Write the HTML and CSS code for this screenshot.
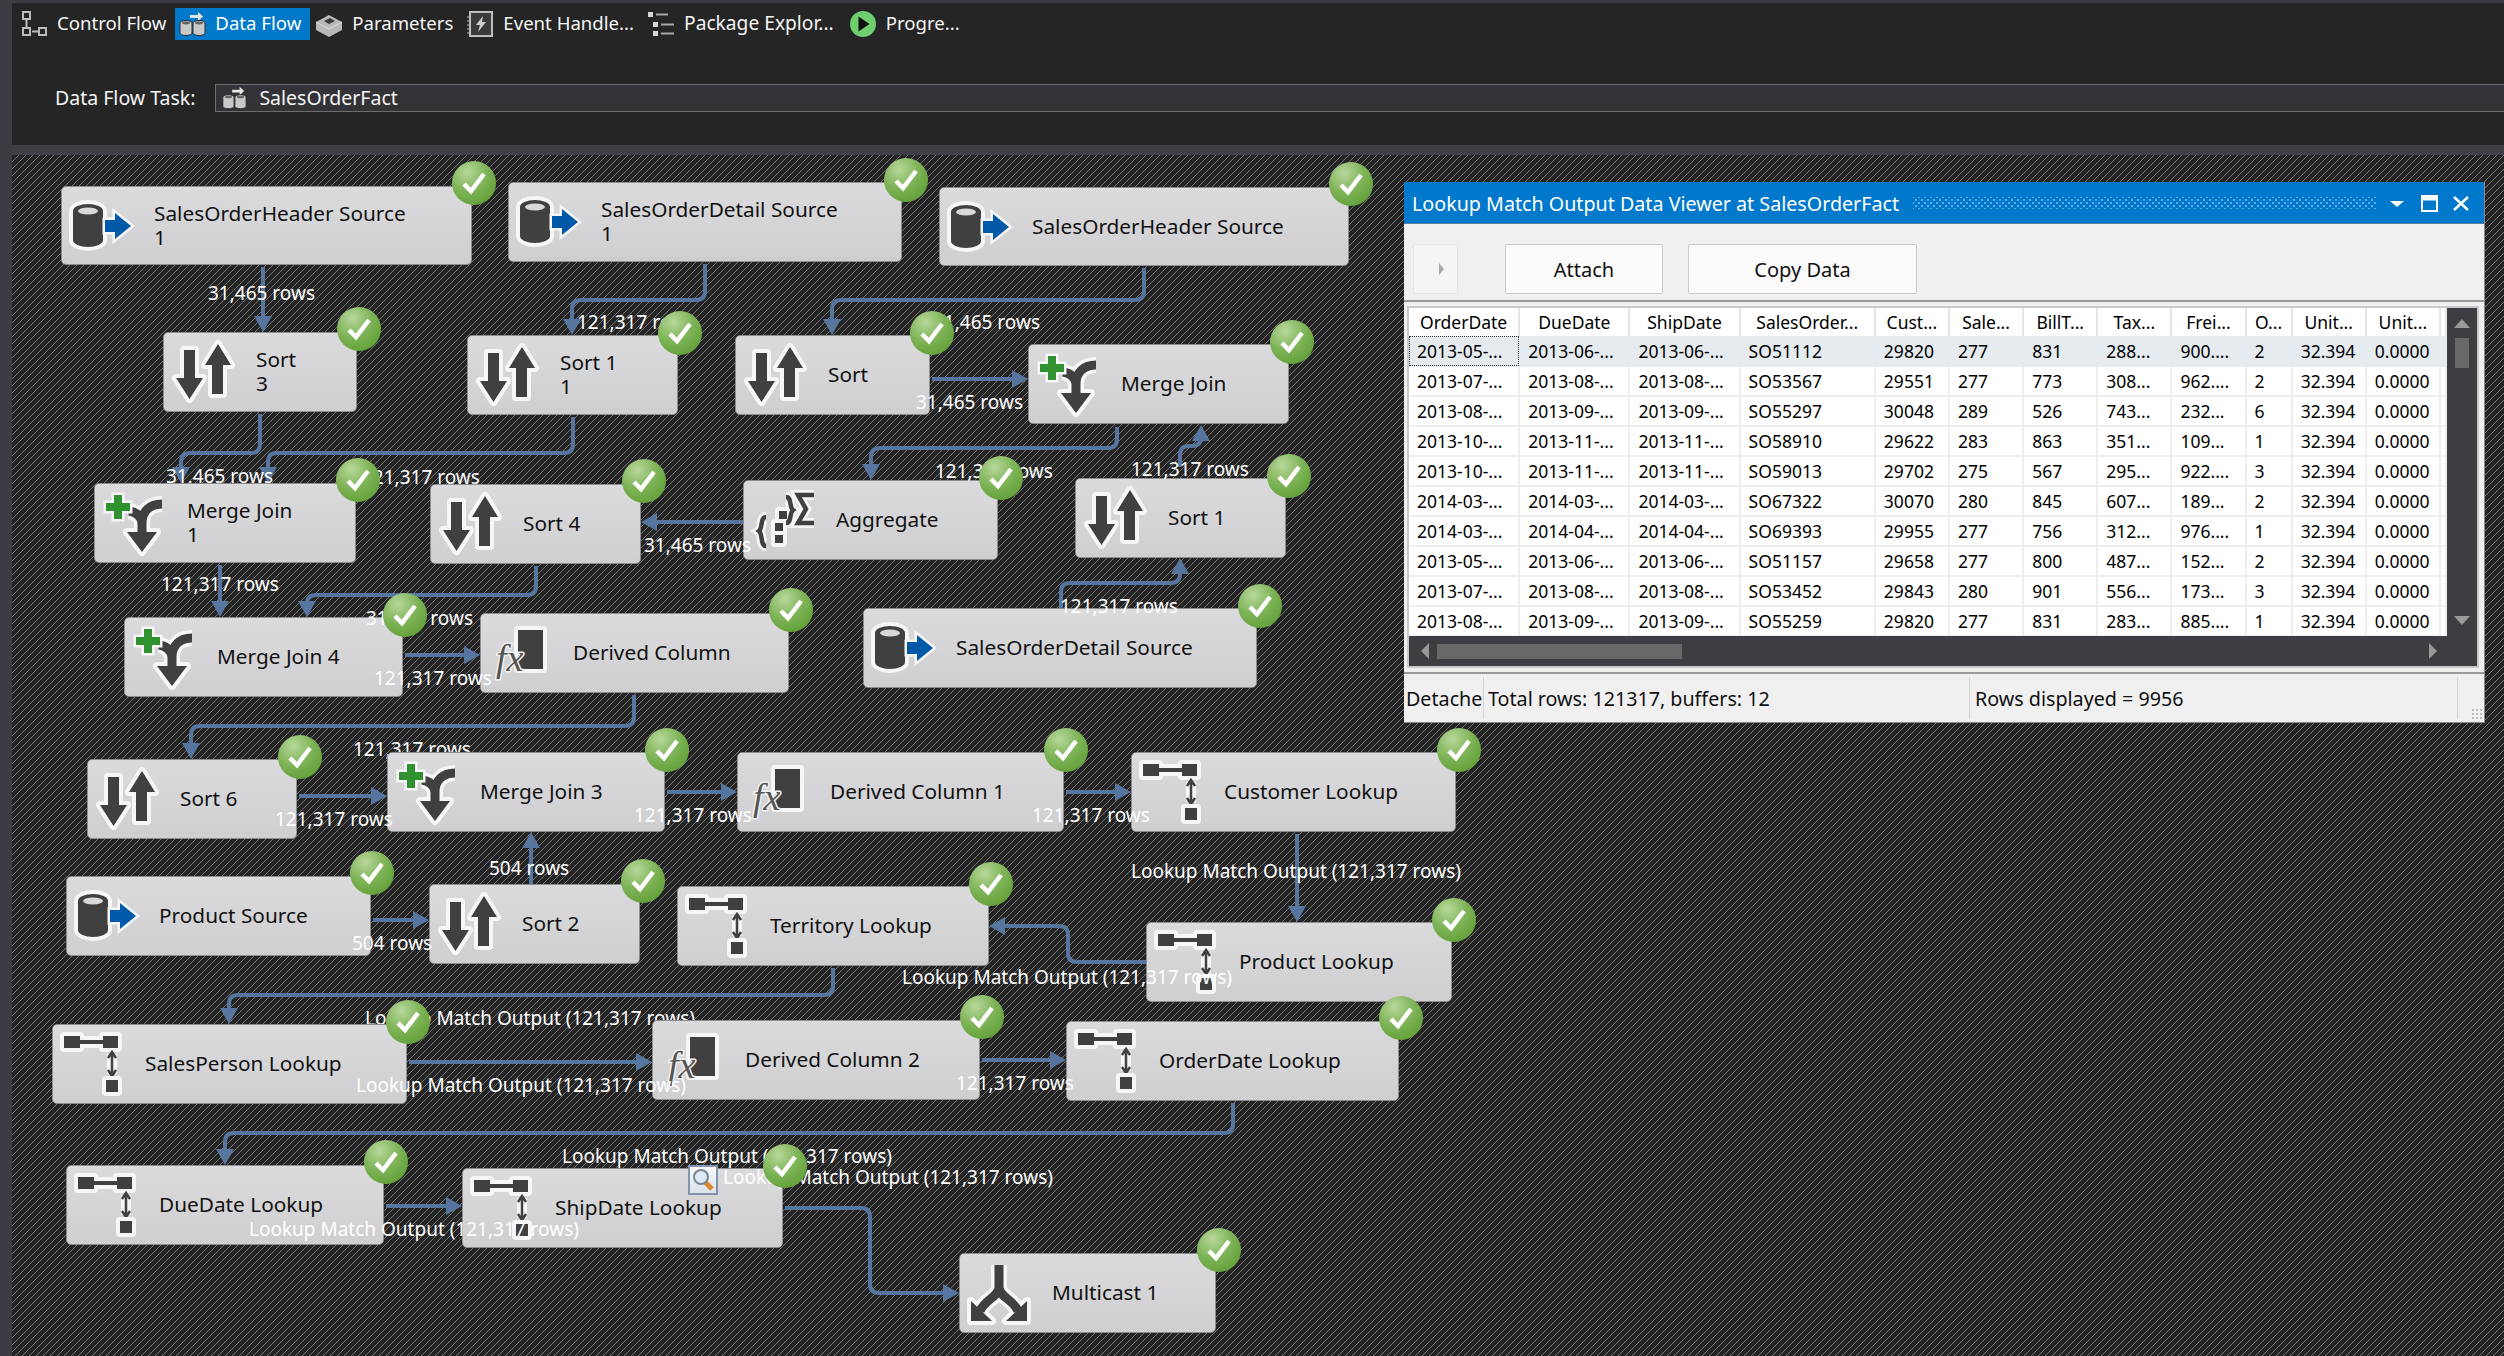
FILE: index.html
```html
<!DOCTYPE html>
<html lang="en">
<head>
  <meta charset="UTF-8" />
  <meta name="viewport" content="width=device-width, initial-scale=1.0" />
  <title>SalesOrderFact - Data Flow</title>
  <link rel="stylesheet" href="styles.css">
</head>
<body>
  <!-- icon sheet, used by the nodes and the tabs -->
  <svg class="icon-sheet" aria-hidden="true">
    <symbol id="icon-source" viewBox="0 0 64 64">
      <path class="dark" d="M4 17 a15 7 0 0 1 30 0 V46 a15 7 0 0 1 -30 0 Z" />
      <ellipse cx="19" cy="17" rx="10" ry="3.5" fill="#d9d9d9" />
      <path class="blue" d="M36 26 H46 V19 L62 32 L46 45 V38 H36 Z" />
    </symbol>
    <symbol id="icon-sort" viewBox="0 0 64 64">
      <path class="dark" d="M13 10 H24 V38 H32 L18.5 59 L5 38 H13 Z" />
      <path class="dark" d="M41 54 V25 H34 L47 4 L60 25 H52 V54 Z" />
    </symbol>
    <symbol id="icon-merge" viewBox="0 0 64 64">
      <path class="halo" d="M60 13 C48 13 40 20 40 32 V44 M27 20 C34 21 39 25 40 32" />
      <path class="dark" d="M25 41 H55 L40 61 Z" />
      <path class="line" d="M60 13 C48 13 40 20 40 32 V44 M27 20 C34 21 39 25 40 32" />
      <path class="green" d="M12 4 H20 V12 H28 V20 H20 V28 H12 V20 H4 V12 H12 Z" />
    </symbol>
    <symbol id="icon-derived" viewBox="0 0 64 64">
      <rect class="dark" x="30" y="9" width="25" height="39" />
      <text class="icon-fx" x="8" y="50">fx</text>
    </symbol>
    <symbol id="icon-aggregate" viewBox="0 0 64 64">
      <path class="halo-thin" d="M15 29 C9 29 12 40 8 43 C12 46 9 58 15 58 M35 9 C41 9 38 19 42 22 C38 25 41 35 35 35 M63 7 H47 L55 21 L47 35 H63" />
      <path class="dark" d="M28 23 h8 v8 h-8 Z M24 35 h8 v8 h-8 Z M24 47 h8 v8 h-8 Z" />
      <path class="line-thin" d="M15 29 C9 29 12 40 8 43 C12 46 9 58 15 58 M35 9 C41 9 38 19 42 22 C38 25 41 35 35 35 M63 7 H47 L55 21 L47 35 H63" />
    </symbol>
    <symbol id="icon-lookup" viewBox="0 0 64 64">
      <path class="dark" d="M4 4 H20 V8 H43 V4 H58 V16 H43 V12 H20 V16 H4 Z" />
      <path class="halo-thin" d="M52 22 V42" />
      <path class="line-arrow" d="M52 22 V42 M48 26 L52 20 L56 26 M48 38 L52 44 L56 38" />
      <rect class="dark" x="46" y="48" width="12" height="12" />
    </symbol>
    <symbol id="icon-multicast" viewBox="0 0 64 64">
      <path class="halo" d="M32 4 V26 C32 36 18 38 13 50 M32 26 C32 36 46 38 51 50" />
      <path class="dark" d="M4 40 L25 60 H4 Z M60 40 L39 60 H60 Z" />
      <path class="line" d="M32 4 V26 C32 36 18 38 13 50 M32 26 C32 36 46 38 51 50" />
    </symbol>
    <symbol id="tab-data" viewBox="0 0 28 28">
      <path d="M12 5 H20 V2 L25 6.5 L20 11 V8 H12 Z" fill="#e6e6e6" />
      <path d="M2 13 a6 2.5 0 0 1 12 0 V23 a6 2.5 0 0 1 -12 0 Z" fill="#c9c9c9" stroke="#2c2c2c" />
      <path d="M15 13 a6 2.5 0 0 1 12 0 V23 a6 2.5 0 0 1 -12 0 Z" fill="#c9c9c9" stroke="#2c2c2c" />
      <ellipse cx="8" cy="13" rx="4" ry="1.4" fill="#666" />
      <ellipse cx="21" cy="13" rx="4" ry="1.4" fill="#666" />
    </symbol>
  </svg>

  <div class="tab-bar">
    <div class="tab">
      <svg class="tab-icon" viewBox="0 0 28 28"><path d="M3 2 h7 v7 h-7 Z M3 18 h7 v7 h-7 Z M19 18 h7 v7 h-7 Z" fill="none" stroke="#bcbcbc" stroke-width="2" /><path d="M6.500 10 V17 M12 21.500 H18" stroke="#bcbcbc" stroke-width="2" /></svg>
      <span>Control Flow</span>
    </div>
    <div class="tab tab-active">
      <svg class="tab-icon"><use href="#tab-data" /></svg>
      <span>Data Flow</span>
    </div>
    <div class="tab">
      <svg class="tab-icon" viewBox="0 0 28 28"><path d="M1 12 L14 5 L27 12 V20 L14 27 L1 20 Z" fill="#b8b8b8" /><path d="M9 11 L15 8 L20 11 L14 14 Z" fill="#3a3a3a" /><path d="M1 12 L14 19 L27 12" fill="none" stroke="#dcdcdc" /></svg>
      <span>Parameters</span>
    </div>
    <div class="tab">
      <svg class="tab-icon" viewBox="0 0 28 28"><rect x="4" y="2" width="22" height="24" fill="#3a3a3a" stroke="#bdbdbd" stroke-width="2" /><path d="M1 7 h4 M1 11 h4 M1 15 h4 M1 19 h4 M1 23 h4" stroke="#bdbdbd" /><path d="M17 6 L10 15 H14 L12 22 L20 12 H16 Z" fill="#cfcfcf" /></svg>
      <span>Event Handle...</span>
    </div>
    <div class="tab tab-package">
      <svg class="tab-icon" viewBox="0 0 28 28"><path d="M1 2 h5 v5 h-5 Z M6 12 h5 v5 h-5 Z M6 21 h5 v5 h-5 Z" fill="#d6d6d6" /><path d="M9 4.500 H21 M14 14.500 H27 M14 23.500 H27" stroke="#a8a8a8" stroke-width="2" /></svg>
      <span>Package Explor...</span>
    </div>
    <div class="tab">
      <svg class="tab-icon" viewBox="0 0 28 28"><circle cx="14" cy="14" r="13" fill="#6fcf6f" /><path d="M9.500 6.500 L20.500 14 L9.500 21.500 Z" fill="#111" /></svg>
      <span>Progre...</span>
    </div>
  </div>

  <div class="task-bar">
    <span class="task-label">Data Flow Task:</span>
    <div class="task-box">
      <svg class="task-icon"><use href="#tab-data" /></svg>
      <span>SalesOrderFact</span>
    </div>
  </div>
  <div class="band"></div>

  <div class="canvas" id="canvas">
    <svg class="paths" id="paths"></svg>

    <div class="viewer">
      <div class="viewer-title">
        <span class="viewer-name">Lookup Match Output Data Viewer at SalesOrderFact</span>
        <span class="viewer-dots"></span>
        <svg class="viewer-controls" viewBox="0 0 80 16">
          <path d="M0 6 H14 L7 12 Z" fill="#fff" />
          <path d="M32 1 H47 V16 H32 Z" fill="none" stroke="#fff" stroke-width="2" />
          <path d="M32 3.500 H47" stroke="#fff" stroke-width="4" />
          <path d="M64 2 L78 15 M78 2 L64 15" stroke="#fff" stroke-width="2.500" />
        </svg>
      </div>
      <div class="viewer-tools">
        <button class="tool-toggle"><i class="tool-arrow"></i></button>
        <button class="tool-btn attach-btn">Attach</button>
        <button class="tool-btn copy-btn">Copy Data</button>
      </div>
      <div class="grid-frame">
        <div class="grid-main">
          <div class="grid-data">
            <table class="grid">
              <colgroup>
                <col class="w-date"><col class="w-date"><col class="w-date"><col class="w-order">
                <col class="w-num"><col class="w-num"><col class="w-num"><col class="w-num"><col class="w-num">
                <col class="w-small"><col class="w-num"><col class="w-num"><col class="w-rest">
              </colgroup>
              <thead>
                <tr>
                  <th>OrderDate</th><th>DueDate</th><th>ShipDate</th><th>SalesOrder...</th><th>Cust...</th><th>Sale...</th>
                  <th>BillT...</th><th>Tax...</th><th>Frei...</th><th>O...</th><th>Unit...</th><th>Unit...</th><th></th>
                </tr>
              </thead>
              <tbody id="rows"></tbody>
            </table>
          </div>
          <div class="vscroll">
            <i class="arrow-up"></i>
            <i class="vthumb"></i>
            <i class="arrow-down"></i>
          </div>
        </div>
        <div class="hscroll">
          <i class="arrow-left"></i>
          <i class="hthumb"></i>
          <i class="arrow-right"></i>
        </div>
      </div>
      <div class="viewer-status">
        <span class="status-cell status-first">Detache</span>
        <span class="status-cell status-total">Total rows: 121317, buffers: 12</span>
        <span class="status-cell status-shown">Rows displayed = 9956</span>
        <span class="status-cell status-end"><i class="grip"></i></span>
      </div>
    </div>
  </div>

  <script src="app.js"></script>
</body>
</html>
```

FILE: styles.css
```css
body {
  margin: 0;
  height: 1356px;
  overflow: hidden;
  background: #3c3d42;
  font-family: "Noto Sans", "Open Sans", sans-serif;
  padding: 3px 0 0 12px;
  box-sizing: border-box;
}
.icon-sheet {
  display: none;
}
symbol {
  overflow: visible;
}

/* tabs */
.tab-bar {
  display: flex;
  height: 37px;
  padding: 5px 0 0 8px;
  box-sizing: border-box;
  background: #252526;
  gap: 5px;
}
.tab {
  display: flex;
  align-items: flex-start;
  gap: 9px;
  height: 32px;
  padding: 0 8px 0 0;
  font-size: 18.600px;
  line-height: 30px;
  color: #f4f4f4;
  white-space: nowrap;
}
.tab-active {
  background: #0079cb;
  color: #fff;
  margin-left: -4px;
  padding: 0 9px 0 3px;
}
.tab-package {
  font-size: 19.200px;
  padding-right: 10px;
}
.tab-icon {
  width: 28px;
  height: 28px;
  margin-top: 2px;
  flex: none;
}
.task-bar {
  display: flex;
  align-items: center;
  height: 105px;
  padding: 10px 0 0 43px;
  box-sizing: border-box;
  background: #252526;
  gap: 20px;
}
.task-label {
  font-size: 19.500px;
  color: #f4f4f4;
}
.task-box {
  flex: 1;
  display: flex;
  align-items: center;
  gap: 11px;
  height: 28px;
  box-sizing: border-box;
  padding-left: 4px;
  background: #323237;
  border: 1px solid #6d6d6d;
  border-right: 0;
  font-size: 19.500px;
  color: #f4f4f4;
}
.task-icon {
  width: 28px;
  height: 26px;
}
.band {
  height: 10px;
  background: #3f4045;
}

/* diagram */
.canvas {
  position: relative;
  height: 1201px;
  background-color: #252526;
  background-image: linear-gradient(135deg, transparent 45%, #747475 45%, #747475 55%, transparent 55%);
  background-size: 7px 7px;
  overflow: hidden;
}
.paths {
  position: absolute;
  left: 0;
  top: 0;
  width: 2492px;
  height: 1201px;
  z-index: 1;
}
.flow {
  fill: none;
  stroke: #56769f;
  stroke-width: 4;
}
.flow-head {
  fill: #56769f;
}
.node {
  position: absolute;
  z-index: 3;
  display: flex;
  align-items: center;
  box-sizing: border-box;
  padding: 0 0 2px 92px;
  background: linear-gradient(#dbdbdd, #cfcfd1);
  border: 1px solid #8d8d8d;
  border-radius: 5px;
  font-size: 20.800px;
  line-height: 24px;
  color: #111;
  white-space: pre-line;
}
.node-icon {
  position: absolute;
  left: 7px;
  top: 7px;
  width: 64px;
  height: 64px;
  overflow: visible;
}
.flow-label {
  position: absolute;
  z-index: 4;
  font-size: 19px;
  line-height: 24px;
  color: #fff;
  white-space: nowrap;
}
.flow-label-under {
  z-index: 2;
}
.badge {
  position: absolute;
  z-index: 5;
  width: 44px;
  height: 44px;
  border-radius: 50%;
  background: radial-gradient(circle at 35% 25%, #b7d79a 0, #7db356 45%, #5f9e35 85%, #4f8d2b 100%);
}
.badge-check {
  position: absolute;
  left: 9px;
  top: 10px;
  width: 26px;
  height: 24px;
}
.magnifier {
  position: absolute;
  z-index: 4;
  left: 676px;
  top: 1010px;
  width: 30px;
  height: 30px;
  box-sizing: border-box;
  border: 2px solid #8494ad;
  background: linear-gradient(#f6f8fb, #dbe2ec);
}
.magnifier-glass {
  display: block;
  width: 26px;
  height: 26px;
}

/* symbol parts */
.dark {
  fill: #404040;
  stroke: #f6f6f6;
  stroke-width: 8;
  stroke-linejoin: round;
  paint-order: stroke;
}
.blue {
  fill: #0059a8;
  stroke: #f6f6f6;
  stroke-width: 5;
  paint-order: stroke;
}
.green {
  fill: #2f9130;
  stroke: #f6f6f6;
  stroke-width: 5;
  paint-order: stroke;
}
.halo, .halo-thin {
  fill: none;
  stroke: #f6f6f6;
  stroke-width: 16;
}
.halo-thin {
  stroke-width: 10;
}
.line, .line-thin, .line-arrow {
  fill: none;
  stroke: #404040;
  stroke-width: 9;
}
.line-thin {
  stroke-width: 4.500;
}
.line-arrow {
  stroke-width: 2.500;
}
.icon-fx {
  font-family: "Liberation Serif", serif;
  font-style: italic;
  font-size: 38px;
  fill: #555;
  stroke: #f2f2f2;
  stroke-width: 3;
  paint-order: stroke;
}

/* data viewer window */
.viewer {
  position: absolute;
  z-index: 6;
  left: 1392px;
  top: 27px;
  width: 1081px;
  height: 541px;
  display: flex;
  flex-direction: column;
  box-sizing: border-box;
  background: #f0f0f0;
  border-right: 1px solid #8a8a8a;
  border-bottom: 1px solid #8a8a8a;
}
.viewer-title {
  display: flex;
  align-items: center;
  height: 42px;
  flex: none;
  padding: 0 14px 0 8px;
  background: #0078cb;
  border-bottom: 1px solid #5c7f9c;
  box-sizing: border-box;
  color: #fff;
  font-size: 19.700px;
}
.viewer-name {
  padding-top: 2px;
}
.viewer-dots {
  flex: 1;
  height: 12px;
  margin: 0 14px;
  background-image: radial-gradient(#5cabe2 1px, transparent 1.500px), radial-gradient(#5cabe2 1px, transparent 1.500px);
  background-size: 6px 6px;
  background-position: 0 0, 3px 3px;
}
.viewer-controls {
  width: 80px;
  height: 16px;
  overflow: visible;
}
.viewer-tools {
  display: flex;
  align-items: flex-start;
  height: 78px;
  flex: none;
  box-sizing: border-box;
  padding: 20px 0 0 9px;
  border-bottom: 2px solid #9a9a9a;
}
.tool-toggle, .tool-btn {
  height: 50px;
  box-sizing: border-box;
  background: #fbfbfb;
  border: 1px solid #cbcbcb;
  border-radius: 2px;
  font: inherit;
  font-size: 20px;
  color: #111;
}
.tool-toggle {
  width: 45px;
  margin-right: 47px;
  background: #f5f5f5;
  border-color: #e6e6e6;
}
.tool-arrow {
  display: block;
  margin-left: 19px;
  border-left: 5px solid #a8a8a8;
  border-top: 6px solid transparent;
  border-bottom: 6px solid transparent;
  width: 0;
}
.attach-btn {
  width: 158px;
  margin-right: 25px;
}
.copy-btn {
  width: 229px;
}
.grid-frame {
  display: flex;
  flex-direction: column;
  flex: none;
  width: 1072px;
  height: 362px;
  margin: 4px 0 0 3px;
  box-sizing: border-box;
  border: 2px solid #c9c9c9;
}
.grid-main {
  display: flex;
  height: 328px;
}
.grid-data {
  width: 1038px;
  height: 328px;
  background: #fff;
  overflow: hidden;
}
.grid {
  border-collapse: collapse;
  table-layout: fixed;
  width: 1038px;
  font-size: 17.500px;
  color: #000;
}
.w-date { width: 110px; }
.w-order { width: 135px; }
.w-num { width: 74px; }
.w-small { width: 46px; }
.w-rest { width: 6px; }
.grid th {
  height: 28px;
  padding: 0;
  font-weight: 400;
  text-align: center;
  border-right: 2px solid #e6e6e6;
  white-space: nowrap;
  overflow: hidden;
}
.grid td {
  height: 30px;
  padding: 0 0 0 8px;
  box-sizing: border-box;
  border-right: 2px solid #eee;
  border-bottom: 2px solid #eee;
  white-space: nowrap;
  overflow: hidden;
}
.row-current td {
  background: #e6ebf0;
  border-right-color: #e6ebf0;
  border-bottom-color: #e6ebf0;
}
.row-current td:first-child {
  outline: 1px dotted #333;
  outline-offset: -1px;
}
.vscroll {
  position: relative;
  width: 30px;
  background: #3e3e42;
}
.arrow-up, .arrow-down, .arrow-left, .arrow-right, .vthumb, .hthumb {
  position: absolute;
}
.arrow-up {
  left: 7px;
  top: 11px;
  border: 8px solid transparent;
  border-top: 0;
  border-bottom: 9px solid #999;
}
.arrow-down {
  left: 7px;
  bottom: 11px;
  border: 8px solid transparent;
  border-bottom: 0;
  border-top: 9px solid #999;
}
.vthumb {
  left: 8px;
  top: 30px;
  width: 14px;
  height: 30px;
  background: #686868;
}
.hscroll {
  position: relative;
  height: 30px;
  background: #3e3e42;
}
.arrow-left {
  left: 12px;
  top: 7px;
  border: 8px solid transparent;
  border-left: 0;
  border-right: 8px solid #999;
}
.arrow-right {
  right: 40px;
  top: 7px;
  border: 8px solid transparent;
  border-right: 0;
  border-left: 8px solid #999;
}
.hthumb {
  left: 28px;
  top: 8px;
  width: 245px;
  height: 15px;
  background: #686868;
}
.viewer-status {
  display: flex;
  flex: 1;
  align-items: stretch;
  margin-top: 4px;
  padding: 3px 0;
  border-top: 2px solid #9a9a9a;
  font-size: 19.700px;
  color: #111;
  white-space: nowrap;
}
.status-cell {
  display: flex;
  align-items: center;
  box-sizing: border-box;
  overflow: hidden;
  border-right: 1px solid #d5d5d5;
}
.status-first {
  width: 80px;
  padding-left: 2px;
}
.status-total {
  width: 486px;
  padding-left: 4px;
}
.status-shown {
  width: 488px;
  padding-left: 5px;
}
.status-end {
  flex: 1;
  position: relative;
  border-right: 0;
}
.grip {
  position: absolute;
  right: 1px;
  bottom: -1px;
  width: 12px;
  height: 12px;
  background-image: radial-gradient(#bbb 1px, transparent 1.500px);
  background-size: 4px 4px;
}
```

FILE: app.js
```js
// page coords of the canvas corner, the data below was read off the full page
const OX = 12;
const OY = 155;

// name, left, top, right, bottom, icon, badge centre x, badge centre y
const nodes = [
  ["SalesOrderHeader Source\n1", 61, 186, 472, 265, "source", 474, 183],
  ["SalesOrderDetail Source\n1", 508, 182, 902, 262, "source", 906, 180],
  ["SalesOrderHeader Source", 939, 187, 1349, 266, "source", 1351, 184],
  ["Sort\n3", 163, 332, 357, 412, "sort", 359, 329],
  ["Sort 1\n1", 467, 335, 678, 415, "sort", 680, 333],
  ["Sort", 735, 335, 930, 415, "sort", 932, 333],
  ["Merge Join", 1028, 344, 1289, 424, "merge", 1292, 342],
  ["Merge Join\n1", 94, 483, 356, 563, "merge", 358, 480],
  ["Sort 4", 430, 484, 641, 564, "sort", 644, 481],
  ["Aggregate", 743, 480, 998, 560, "aggregate", 1001, 478],
  ["Sort 1", 1075, 478, 1286, 558, "sort", 1289, 476],
  ["Merge Join 4", 124, 617, 403, 697, "merge", 405, 615],
  ["Derived Column", 480, 613, 789, 693, "derived", 791, 610],
  ["SalesOrderDetail Source", 863, 608, 1257, 688, "source", 1260, 606],
  ["Sort 6", 87, 759, 297, 839, "sort", 300, 757],
  ["Merge Join 3", 387, 752, 665, 832, "merge", 667, 750],
  ["Derived Column 1", 737, 752, 1064, 832, "derived", 1066, 750],
  ["Customer Lookup", 1131, 752, 1456, 832, "lookup", 1459, 750],
  ["Product Source", 66, 876, 371, 956, "source", 372, 873],
  ["Sort 2", 429, 884, 640, 964, "sort", 643, 881],
  ["Territory Lookup", 677, 886, 989, 966, "lookup", 991, 884],
  ["Product Lookup", 1146, 922, 1452, 1002, "lookup", 1454, 920],
  ["SalesPerson Lookup", 52, 1024, 407, 1104, "lookup", 408, 1022],
  ["Derived Column 2", 652, 1020, 980, 1100, "derived", 982, 1017],
  ["OrderDate Lookup", 1066, 1021, 1399, 1101, "lookup", 1401, 1018],
  ["DueDate Lookup", 66, 1165, 384, 1245, "lookup", 386, 1162],
  ["ShipDate Lookup", 462, 1168, 783, 1248, "lookup", 785, 1166],
  ["Multicast 1", 959, 1253, 1216, 1333, "multicast", 1219, 1250],
];

// points of each data path, the last one is the arrow tip
const flows = [
  [[263, 267], [263, 332]],
  [[260, 414], [260, 453], [181, 453], [181, 483]],
  [[573, 417], [573, 453], [268, 453], [268, 483]],
  [[705, 264], [705, 300], [572, 300], [572, 335]],
  [[1144, 268], [1144, 300], [832, 300], [832, 335]],
  [[932, 379], [1028, 379]],
  [[1117, 427], [1117, 448], [871, 448], [871, 480]],
  [[1180, 467], [1180, 446], [1201, 446], [1201, 425]],
  [[1061, 608], [1061, 583], [1180, 583], [1180, 558]],
  [[743, 522], [641, 522]],
  [[220, 565], [220, 617]],
  [[536, 566], [536, 595], [307, 595], [307, 617]],
  [[405, 655], [480, 655]],
  [[634, 695], [634, 726], [191, 726], [191, 759]],
  [[299, 796], [387, 796]],
  [[667, 792], [737, 792]],
  [[1066, 792], [1131, 792]],
  [[1297, 834], [1297, 922]],
  [[1146, 962], [1068, 962], [1068, 926], [989, 926]],
  [[833, 968], [833, 995], [229, 995], [229, 1024]],
  [[373, 920], [429, 920]],
  [[531, 884], [531, 832]],
  [[409, 1062], [652, 1062]],
  [[982, 1060], [1066, 1060]],
  [[1233, 1103], [1233, 1133], [225, 1133], [225, 1165]],
  [[386, 1206], [462, 1206]],
  [[785, 1208], [870, 1208], [870, 1293], [959, 1293]],
];

const LOOKUP = "Lookup Match Output (121,317 rows)";
const RS = "121,317 rows";
const SH = "31,465 rows";

// text, left, centre y, drawn under the nodes
const labels = [
  [SH, 208, 293], [RS, 577, 322], [SH, 933, 322], [SH, 916, 402],
  [SH, 166, 476, true], [RS, 362, 477], [RS, 161, 584], [SH, 366, 618],
  [SH, 644, 545], [RS, 374, 678], [RS, 353, 749, true], [RS, 275, 819],
  [RS, 634, 815], ["504 rows", 489, 868], [RS, 935, 471], [RS, 1131, 469],
  [RS, 1060, 606], [RS, 1032, 815], [LOOKUP, 1131, 871], [LOOKUP, 902, 977],
  ["504 rows", 352, 943], [LOOKUP, 365, 1018, true], [LOOKUP, 356, 1085], [RS, 956, 1083],
  [LOOKUP, 562, 1156], [LOOKUP, 723, 1177], [LOOKUP, 249, 1229],
];

const rows = [
  ["2013-05-...", "2013-06-...", "2013-06-...", "SO51112", "29820", "277", "831", "288...", "900....", "2"],
  ["2013-07-...", "2013-08-...", "2013-08-...", "SO53567", "29551", "277", "773", "308...", "962....", "2"],
  ["2013-08-...", "2013-09-...", "2013-09-...", "SO55297", "30048", "289", "526", "743...", "232...", "6"],
  ["2013-10-...", "2013-11-...", "2013-11-...", "SO58910", "29622", "283", "863", "351...", "109...", "1"],
  ["2013-10-...", "2013-11-...", "2013-11-...", "SO59013", "29702", "275", "567", "295...", "922....", "3"],
  ["2014-03-...", "2014-03-...", "2014-03-...", "SO67322", "30070", "280", "845", "607...", "189...", "2"],
  ["2014-03-...", "2014-04-...", "2014-04-...", "SO69393", "29955", "277", "756", "312...", "976....", "1"],
  ["2013-05-...", "2013-06-...", "2013-06-...", "SO51157", "29658", "277", "800", "487...", "152...", "2"],
  ["2013-07-...", "2013-08-...", "2013-08-...", "SO53452", "29843", "280", "901", "556...", "173...", "3"],
  ["2013-08-...", "2013-09-...", "2013-09-...", "SO55259", "29820", "277", "831", "283...", "885....", "1"],
];

const SVGNS = "http://www.w3.org/2000/svg";
const canvas = document.getElementById("canvas");

function place(el, x, y) {
  el.style.left = (x - OX) + "px";
  el.style.top = (y - OY) + "px";
}

// svg line through the points with rounded corners
function flowPath(points, tipLen) {
  const last = points[points.length - 1];
  const prev = points[points.length - 2];
  const dx = Math.sign(last[0] - prev[0]);
  const dy = Math.sign(last[1] - prev[1]);
  const end = [last[0] - dx * tipLen, last[1] - dy * tipLen];
  const pts = points.slice(0, -1).concat([end]);
  let d = "M" + (pts[0][0] - OX) + " " + (pts[0][1] - OY);
  for (let i = 1; i < pts.length - 1; i++) {
    const p = pts[i];
    const a = pts[i - 1];
    const b = pts[i + 1];
    const r = 9;
    const ax = p[0] - Math.sign(p[0] - a[0]) * r;
    const ay = p[1] - Math.sign(p[1] - a[1]) * r;
    const bx = p[0] + Math.sign(b[0] - p[0]) * r;
    const by = p[1] + Math.sign(b[1] - p[1]) * r;
    d += " L" + (ax - OX) + " " + (ay - OY) + " Q" + (p[0] - OX) + " " + (p[1] - OY) + " " + (bx - OX) + " " + (by - OY);
  }
  return d + " L" + (end[0] - OX) + " " + (end[1] - OY);
}

function drawFlows() {
  const svg = document.getElementById("paths");
  flows.forEach(function (points) {
    const line = document.createElementNS(SVGNS, "path");
    line.setAttribute("class", "flow");
    line.setAttribute("d", flowPath(points, 10));
    svg.appendChild(line);

    const tip = points[points.length - 1];
    const from = points[points.length - 2];
    const dx = Math.sign(tip[0] - from[0]);
    const dy = Math.sign(tip[1] - from[1]);
    const tx = tip[0] - OX;
    const ty = tip[1] - OY;
    const head = document.createElementNS(SVGNS, "polygon");
    head.setAttribute("class", "flow-head");
    head.setAttribute("points", [
      tx + "," + ty,
      (tx - dx * 16 - dy * 9) + "," + (ty - dy * 16 + dx * 9),
      (tx - dx * 16 + dy * 9) + "," + (ty - dy * 16 - dx * 9),
    ].join(" "));
    svg.appendChild(head);
  });
}

function drawNodes() {
  nodes.forEach(function (n) {
    const node = document.createElement("div");
    node.className = "node";
    place(node, n[1], n[2]);
    node.style.width = (n[3] - n[1]) + "px";
    node.style.height = (n[4] - n[2]) + "px";
    node.innerHTML = '<svg class="node-icon"><use href="#icon-' + n[5] + '" /></svg>';
    const text = document.createElement("span");
    text.textContent = n[0];
    node.appendChild(text);
    canvas.appendChild(node);

    const badge = document.createElement("div");
    badge.className = "badge";
    place(badge, n[6] - 22, n[7] - 22);
    badge.innerHTML = '<svg class="badge-check" viewBox="0 0 26 24"><path d="M3 13 L10 20 L23 3" fill="none" stroke="#fff" stroke-width="4.500" /></svg>';
    canvas.appendChild(badge);
  });
}

function drawLabels() {
  labels.forEach(function (l) {
    const label = document.createElement("span");
    label.className = l[3] ? "flow-label flow-label-under" : "flow-label";
    label.textContent = l[0];
    place(label, l[1], l[2] - 12);
    canvas.appendChild(label);
  });
}

function drawMagnifier() {
  const box = document.createElement("div");
  box.className = "magnifier";
  box.innerHTML = '<svg class="magnifier-glass" viewBox="0 0 26 26"><path d="M15 15 L22 22" stroke="#d98a2b" stroke-width="5" /><circle cx="11" cy="10" r="7" fill="#dfe9f5" stroke="#7c8794" stroke-width="2" /></svg>';
  canvas.appendChild(box);
}

function fillRows() {
  const body = document.getElementById("rows");
  rows.forEach(function (row, i) {
    const tr = document.createElement("tr");
    if (i === 0) tr.className = "row-current";
    row.concat(["32.394", "0.0000", ""]).forEach(function (value) {
      const td = document.createElement("td");
      td.textContent = value;
      tr.appendChild(td);
    });
    body.appendChild(tr);
  });
}

drawFlows();
drawNodes();
drawLabels();
drawMagnifier();
fillRows();
```
